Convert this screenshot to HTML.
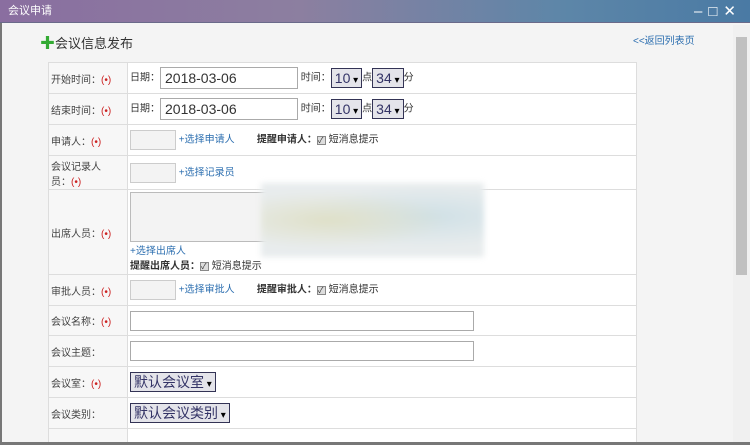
<!DOCTYPE html>
<html><head><meta charset="utf-8"><style>
*{margin:0;padding:0;box-sizing:border-box}
html,body{width:750px;height:445px;overflow:hidden}
body{background:#f4f4f4;font-family:"Liberation Sans","Noto Sans CJK SC",sans-serif;font-size:12px;color:#333;position:relative}
.wrap{position:absolute;left:0;top:0;width:750px;height:445px;overflow:hidden}
.title{position:absolute;left:0;top:0;width:750px;height:23px;background:linear-gradient(90deg,#8a6ea0 0%,#8c7fa0 40%,#5d86a8 75%,#4a7aa4 100%);color:#fff;font-size:11px;line-height:23px;padding-left:8px;border-bottom:1px solid #6a6a8a}
.ctl{position:absolute;top:0;right:8px;color:#fff;font-size:15px;line-height:23px;letter-spacing:6px}
.frame{position:absolute;left:0;top:23px;width:2px;height:422px;background:#777}
.bot{position:absolute;left:0;top:442px;width:750px;height:3px;background:#777}
.sb{position:absolute;left:733px;top:25px;width:17px;height:418px;background:#f0f0f0}
.sb i{position:absolute;left:3px;top:12px;width:11px;height:238px;background:#c0c0c0}
.h{position:absolute;left:40px;top:32px;font-size:13px;color:#333}
.h b{color:#3a3;font-size:15px;font-weight:bold}
.back{position:absolute;left:633px;top:32px;color:#2d6fb0;font-size:10px}
table{position:absolute;left:48px;top:62px;width:589px;border-collapse:collapse;background:#fff;table-layout:fixed}
td{border:1px solid #ddd;vertical-align:middle;font-size:10px;overflow:hidden;white-space:nowrap}
td.l{width:79px;background:#f7f7f7;padding-left:2px;color:#444;white-space:normal}
td.v{padding-left:2px}
.r{color:#c22;margin-left:0}
.inp{display:inline-block;vertical-align:middle;border:1px solid #aaa;background:#fff;height:22px;font-size:14px;line-height:20px;padding-left:4px}
.sel{display:inline-block;vertical-align:middle;border:1px solid #335;background:#e4e4ea;color:#336;font-size:14px;height:20px;line-height:18px;padding:0 3px}
.sel:after{content:" ▾";font-size:10px;color:#000}
.sm{display:inline-block;vertical-align:middle;width:46px;height:20px;border:1px solid #ccc;background:#f3f3f3}
a{color:#2d6fb0;text-decoration:none}
.chk{display:inline-block;width:9px;height:9px;border:1px solid #888;background:#ddd;font-size:8px;line-height:7px;vertical-align:middle}
.blur{position:absolute;left:261px;top:183px;width:223px;height:74px;background:radial-gradient(ellipse at 30% 50%,#dfe0c8,transparent 55%),radial-gradient(ellipse at 75% 45%,#cfe0e6,transparent 55%),#e8eced;filter:blur(3px)}
</style></head><body><div class="wrap">
<div class="title">会议申请<span class="ctl">–□✕</span></div>
<div class="frame"></div>
<div class="sb"><i></i></div>
<div class="h"><b>✚</b>会议信息发布</div>
<div class="back">&lt;&lt;返回列表页</div>
<table>
<colgroup><col style="width:79px"><col></colgroup>
<tr style="height:31px"><td class="l">开始时间：<span class="r">(•)</span></td><td class="v">日期：<span class="inp" style="width:138px">2018-03-06</span>&nbsp;时间：<span class="sel">10</span>点<span class="sel">34</span>分</td></tr>
<tr style="height:31px"><td class="l">结束时间：<span class="r">(•)</span></td><td class="v">日期：<span class="inp" style="width:138px">2018-03-06</span>&nbsp;时间：<span class="sel">10</span>点<span class="sel">34</span>分</td></tr>
<tr style="height:31px"><td class="l">申请人：<span class="r">(•)</span></td><td class="v"><span class="sm"></span> <a>+选择申请人</a>&nbsp;&nbsp;&nbsp;&nbsp;&nbsp;&nbsp;&nbsp;&nbsp;<b>提醒申请人：</b><span class="chk">✓</span> 短消息提示</td></tr>
<tr style="height:34px"><td class="l">会议记录人<br>员：<span class="r">(•)</span></td><td class="v"><span class="sm"></span> <a>+选择记录员</a></td></tr>
<tr style="height:85px"><td class="l">出席人员：<span class="r">(•)</span></td><td class="v"><div style="width:140px;height:50px;border:1px solid #bbb;background:#f3f3f3"></div><a>+选择出席人</a><br><b>提醒出席人员：</b><span class="chk">✓</span> 短消息提示</td></tr>
<tr style="height:31px"><td class="l">审批人员：<span class="r">(•)</span></td><td class="v"><span class="sm"></span> <a>+选择审批人</a>&nbsp;&nbsp;&nbsp;&nbsp;&nbsp;&nbsp;&nbsp;&nbsp;<b>提醒审批人：</b><span class="chk">✓</span> 短消息提示</td></tr>
<tr style="height:30px"><td class="l">会议名称：<span class="r">(•)</span></td><td class="v"><span class="inp" style="width:344px;height:20px"></span></td></tr>
<tr style="height:31px"><td class="l">会议主题：</td><td class="v"><span class="inp" style="width:344px;height:20px"></span></td></tr>
<tr style="height:31px"><td class="l">会议室：<span class="r">(•)</span></td><td class="v"><span class="sel">默认会议室</span></td></tr>
<tr style="height:31px"><td class="l">会议类别：</td><td class="v"><span class="sel">默认会议类别</span></td></tr>
<tr style="height:30px"><td class="l"></td><td class="v"><div style="margin-top:8px;width:440px;height:10px;border:1px solid #ccc;background:#eee"></div></td></tr>
</table>
<div class="blur"></div>
<div class="bot"></div>
</div></body></html>
